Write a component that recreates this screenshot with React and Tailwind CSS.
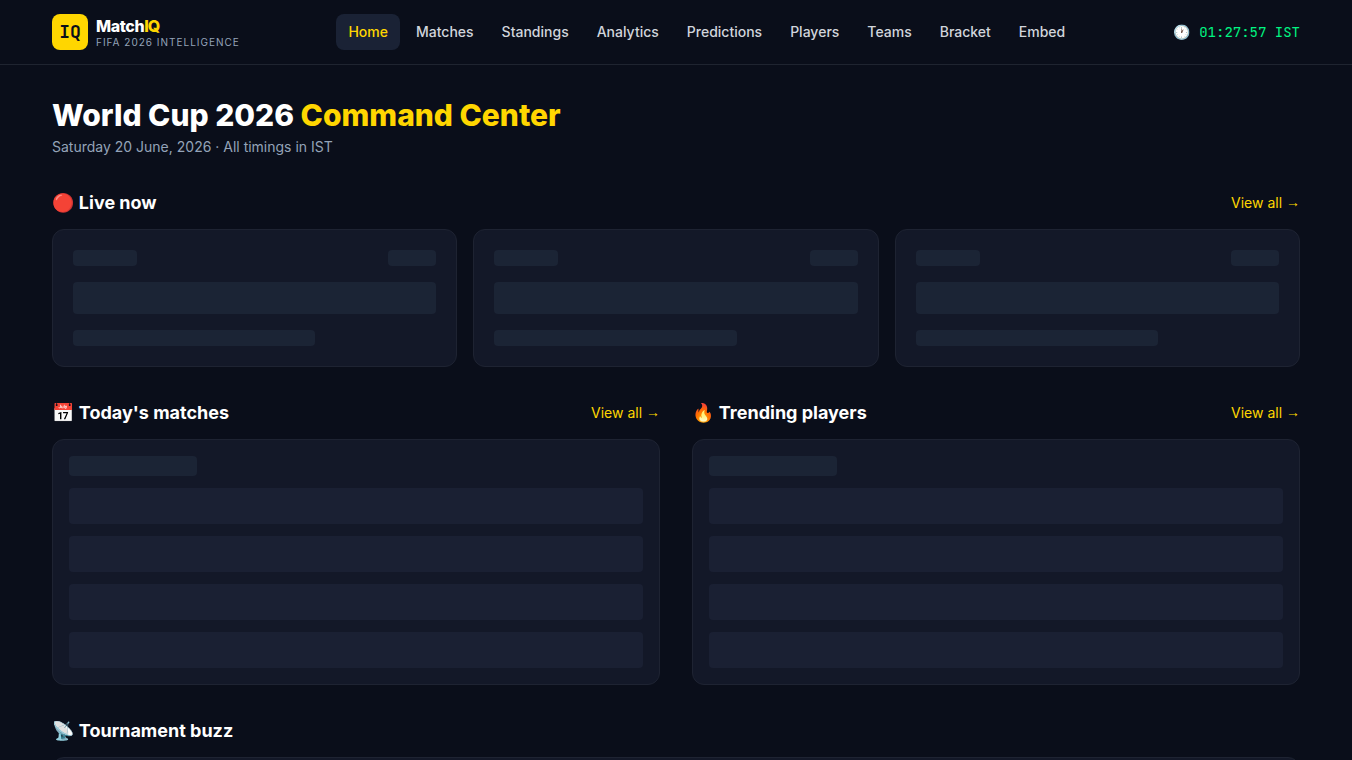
import React from "react";

const navItems = [
  "Home",
  "Matches",
  "Standings",
  "Analytics",
  "Predictions",
  "Players",
  "Teams",
  "Bracket",
  "Embed",
];

const Header = ({ active }) => {
  return (
    <header className="border-b border-[#1f2430] bg-[#0a0e1a]">
      <div className="max-w-7xl mx-auto px-4 h-16 flex items-center justify-between">
        <a className="flex items-center gap-2 pr-px">
          <div className="w-9 h-9 rounded-lg bg-[#ffd600] text-[#0a0e1a] flex items-center justify-center font-['JetBrains_Mono','Liberation_Mono',monospace] font-bold text-lg">
            IQ
          </div>
          <div className="pt-1">
            <div className="text-base font-extrabold leading-4 tracking-tight text-white">
              Match<span className="text-[#ffd600] tracking-[-0.06em]">IQ</span>
            </div>
            <div className="mt-px text-[10px] leading-[15px] tracking-widest text-[#94a3b8]">
              FIFA 2026 INTELLIGENCE
            </div>
          </div>
        </a>
        <nav className="flex items-center gap-1">
          {navItems.map((item) => (
            <a
              key={item}
              className={
                item === active
                  ? "px-3 py-2 rounded-lg text-sm font-medium bg-[#1a2235] text-[#ffd600]"
                  : "px-3 py-2 rounded-lg text-sm font-medium text-gray-300"
              }
            >
              {item}
            </a>
          ))}
        </nav>
        <div className="font-['JetBrains_Mono','Liberation_Mono',monospace] text-sm text-[#00f582] whitespace-pre">
          <span className="mr-px">🕐</span> 01:27:57 IST
        </div>
      </div>
    </header>
  );
};

const SectionTitle = ({ icon, title, link }) => {
  return (
    <div className="flex items-center justify-between mb-3">
      <h2 className="text-lg font-bold text-white">
        <span className="mr-[0.6px]">{icon}</span> {title}
      </h2>
      {link && (
        <a className="text-sm text-[#ffd600]">
          View all{" "}
          <span className="inline-block -translate-y-px font-['Liberation_Sans',sans-serif] leading-none">
            →
          </span>
        </a>
      )}
    </div>
  );
};

const MatchSkeleton = () => {
  return (
    <div className="rounded-xl border border-[#1e2332] bg-[#131828] p-5 flex flex-col gap-4">
      <div className="flex justify-between">
        <div className="h-4 w-16 rounded bg-[#1b2435]" />
        <div className="h-4 w-12 rounded bg-[#1b2435]" />
      </div>
      <div className="h-8 rounded bg-[#1b2435]" />
      <div className="h-4 w-2/3 rounded bg-[#1b2435]" />
    </div>
  );
};

const ListSkeleton = () => {
  return (
    <div className="rounded-xl border border-[#1e2332] bg-[#131828] p-4 flex flex-col gap-3">
      <div className="h-5 w-32 rounded bg-[#1b2435]" />
      {[1, 2, 3, 4].map((row) => (
        <div key={row} className="h-9 rounded bg-[#1a2033]" />
      ))}
    </div>
  );
};

const App = () => {
  return (
    <div className="h-screen overflow-hidden bg-[#0a0e1a] font-['Inter',sans-serif] text-white">
      <Header active="Home" />
      <main className="max-w-7xl mx-auto px-4 py-8 flex flex-col gap-8">
        <div>
          <h1 className="text-3xl font-extrabold">
            World Cup 2026 <span className="text-[#ffd600]">Command Center</span>
          </h1>
          <p className="mt-1 text-sm text-[#94a3b8]">
            Saturday 20 June, 2026 · All timings in IST
          </p>
        </div>

        <section>
          <SectionTitle icon="🔴" title="Live now" link />
          <div className="grid grid-cols-3 gap-4">
            <MatchSkeleton />
            <MatchSkeleton />
            <MatchSkeleton />
          </div>
        </section>

        <div className="grid grid-cols-2 gap-8">
          <section>
            <SectionTitle icon="📅" title="Today's matches" link />
            <ListSkeleton />
          </section>
          <section>
            <SectionTitle icon="🔥" title="Trending players" link />
            <ListSkeleton />
          </section>
        </div>

        <section>
          <SectionTitle icon="📡" title="Tournament buzz" />
          <ListSkeleton />
        </section>
      </main>
    </div>
  );
};

export default App;
